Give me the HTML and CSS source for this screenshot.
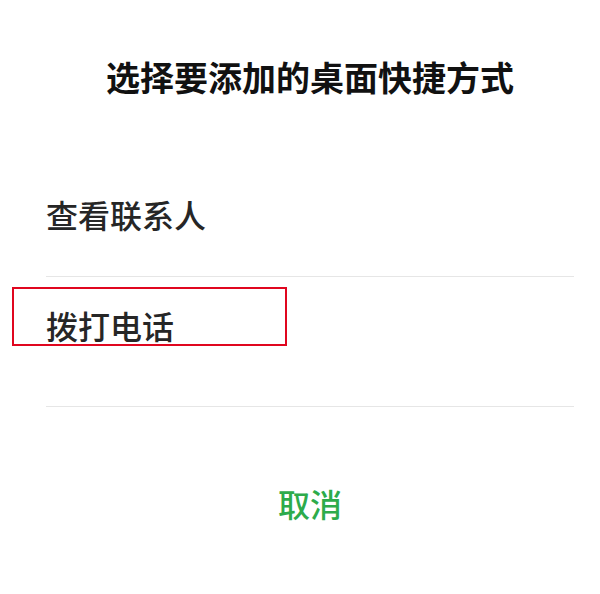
FILE: index.html
```html
<!DOCTYPE html>
<html lang="zh-CN">
<head>
<meta charset="utf-8">
<link rel="stylesheet" href="styles.css">
</head>
<body>
<div class="dialog">
  <h1 class="title">选择要添加的桌面快捷方式</h1>
  <div class="list">
    <div class="row row-first">查看联系人</div>
    <div class="row row-second">拨打电话<span class="highlight"></span></div>
  </div>
  <div class="cancel">取消</div>
</div>
</body>
</html>
```
FILE: styles.css
```css
html, body {
  margin: 0;
  padding: 0;
  background: #ffffff;
}
body {
  font-family: "Noto Sans CJK SC", "Noto Sans", sans-serif;
  width: 600px;
  height: 594px;
  overflow: hidden;
}
.dialog {
  padding: 0 26px 0 46px;
}
.title {
  margin: 60px 0 0;
  font-size: 34px;
  line-height: 34px;
  font-weight: 700;
  color: #111111;
  text-align: center;
}
.list {
  margin-top: 72px;
}
.row {
  position: relative;
  font-size: 32px;
  line-height: 32px;
  font-weight: 500;
  color: #262626;
  border-bottom: 1px solid #e6e6e6;
}
.row-first {
  padding: 32px 0 46px;
}
.row-second {
  padding: 32px 0 65px;
}
.highlight {
  position: absolute;
  left: -34px;
  top: 10px;
  width: 275px;
  height: 59px;
  box-sizing: border-box;
  border: 2px solid #e0061f;
}
.cancel {
  margin-top: 80px;
  font-size: 32px;
  line-height: 32px;
  font-weight: 500;
  color: #2dab4b;
  text-align: center;
}
```
